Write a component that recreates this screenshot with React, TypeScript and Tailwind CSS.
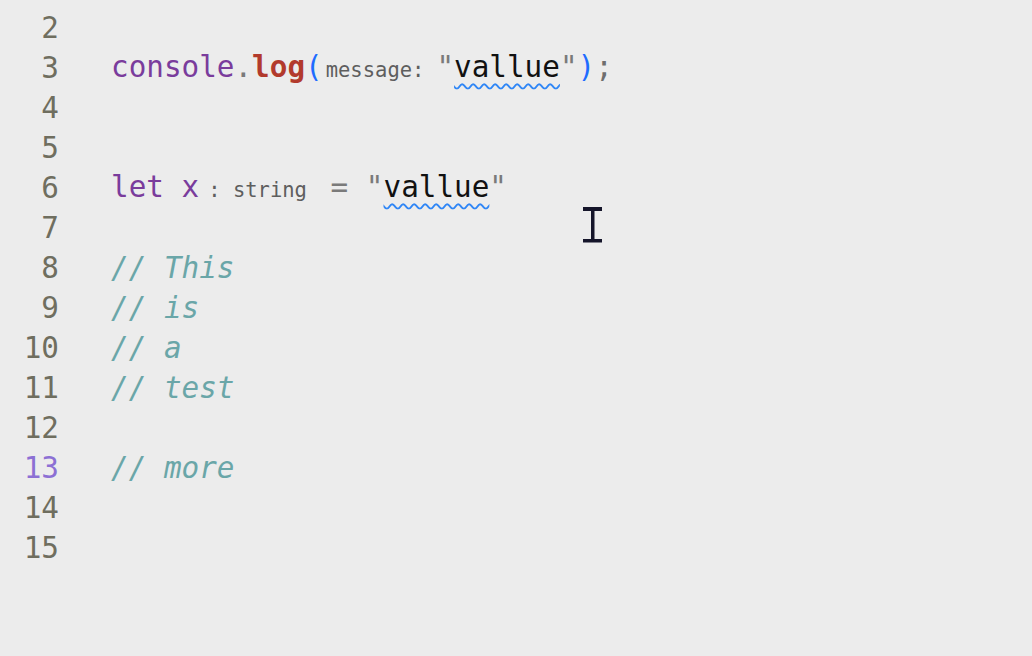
import React from "react";

const mono = "font-['DejaVu_Sans_Mono',monospace]";

function Hint({ children, className = "" }: { children: React.ReactNode; className?: string }) {
  return <span className={`text-[20.5px] text-[#5e5e5e] ${className}`}>{children}</span>;
}

function Squiggle({ children }: { children: React.ReactNode }) {
  return (
    <span className="text-[#111] underline decoration-wavy decoration-[#2f86f6] decoration-[1.5px] underline-offset-[6px]">
      {children}
    </span>
  );
}

const lines: { n: number; active?: boolean; code?: React.ReactNode }[] = [
  { n: 2 },
  {
    n: 3,
    code: (
      <>
        <span className="text-[#7a3c9c]">console</span>
        <span className="text-[#7a7a7a]">.</span>
        <span className="font-bold text-[#b23a2c]">log</span>
        <span className="text-[#1f6cff]">(</span>
        <Hint className="ml-[3px] mr-[12px]">message:</Hint>
        <span className="text-[#7a7a7a]">"</span>
        <Squiggle>vallue</Squiggle>
        <span className="text-[#7a7a7a]">"</span>
        <span className="text-[#1f6cff]">)</span>
        <span className="text-[#6e6e6e]">;</span>
      </>
    ),
  },
  { n: 4 },
  { n: 5 },
  {
    n: 6,
    code: (
      <>
        <span className="text-[#7a3c9c]">let x</span>
        <Hint className="ml-[9px] mr-[6px]">: string</Hint>
        <span className="whitespace-pre text-[#7a7a7a]"> = "</span>
        <Squiggle>vallue</Squiggle>
        <span className="text-[#7a7a7a]">"</span>
      </>
    ),
  },
  { n: 7 },
  { n: 8, code: <span className="italic text-[#6aa6a8]">// This</span> },
  { n: 9, code: <span className="italic text-[#6aa6a8]">// is</span> },
  { n: 10, code: <span className="italic text-[#6aa6a8]">// a</span> },
  { n: 11, code: <span className="italic text-[#6aa6a8]">// test</span> },
  { n: 12 },
  { n: 13, active: true, code: <span className="italic text-[#6aa6a8]">// more</span> },
  { n: 14 },
  { n: 15 },
];

export default function App() {
  return (
    <div className={`relative h-[656px] w-[1032px] overflow-hidden bg-[#ececec] pt-[8px] ${mono} text-[29.3px]`}>
      {lines.map((line) => (
        <div key={line.n} className="flex h-[40px] items-center leading-[40px]">
          <div
            className={`w-[59px] shrink-0 text-right ${line.active ? "text-[#8c70d4]" : "text-[#6f6e5f]"}`}
          >
            {line.n}
          </div>
          <div className="ml-[52px] whitespace-pre">{line.code}</div>
        </div>
      ))}

      {/* mouse I-beam cursor */}
      <svg className="absolute left-[583px] top-[207px]" width="20" height="36" viewBox="0 0 20 36">
        <rect x="0" y="0" width="19" height="4" fill="#15152a" />
        <rect x="8" y="2" width="3.5" height="32" fill="#15152a" />
        <rect x="0" y="32" width="19" height="3.5" fill="#15152a" />
      </svg>
    </div>
  );
}
